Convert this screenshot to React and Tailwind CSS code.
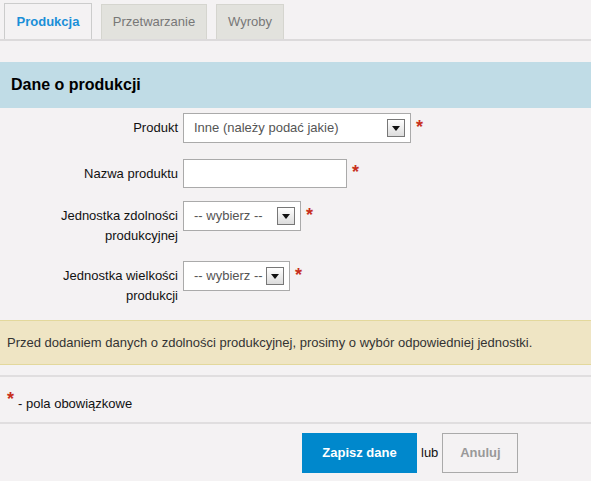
const font = { fontFamily: '"Liberation Sans", Arial, sans-serif' };

function Star({ className = "" }) {
  return (
    <span className={"text-[#c8301c] font-bold text-[18px] leading-none " + className}>*</span>
  );
}

function FakeSelect({ value, width }) {
  return (
    <div
      className={"h-[30px] bg-white border border-[#aaaaaa] flex items-center pl-[10px] pr-[5px] text-[13px] text-[#555555] " + width}
    >
      <span className="flex-1 whitespace-nowrap">{value}</span>
      <span className="w-[18px] h-[18px] border border-[#777777] bg-gradient-to-b from-white to-[#dcdcdc] flex items-center justify-center">
        <svg width="8" height="5" viewBox="0 0 8 5">
          <path d="M0 0h8L4 5z" fill="#111" />
        </svg>
      </span>
    </div>
  );
}

function Row({ label, children, className = "" }) {
  return (
    <div className={"flex items-start " + className}>
      <div className="w-[130px] ml-[48px] text-right text-[13px] leading-[20px] pt-[5px] text-[#111111]">
        {label}
      </div>
      <div className="ml-[5px] flex items-start">{children}</div>
    </div>
  );
}

export default function App() {
  return (
    <div className="w-[591px] h-[481px] bg-[#f4f2f3] overflow-hidden" style={font}>
      {/* tabs */}
      <div className="flex items-end pl-[4px] pt-[3px] border-b-2 border-[#dcdadb]">
        <div className="w-[88px] h-[36px] border border-b-0 border-[#cccccc] bg-[#f4f2f3] flex items-center justify-center text-[13px] font-bold text-[#1a8fd8]">
          Produkcja
        </div>
        <div className="ml-[9px] w-[106px] h-[35px] border border-b-0 border-[#d5d5cf] bg-[#e2e2dd] flex items-center justify-center text-[13px] text-[#777777]">
          Przetwarzanie
        </div>
        <div className="ml-[9px] w-[68px] h-[35px] border border-b-0 border-[#d5d5cf] bg-[#e2e2dd] flex items-center justify-center text-[13px] text-[#777777]">
          Wyroby
        </div>
      </div>

      <div className="mt-[21px] h-[46px] bg-[#c0dce6] flex items-center px-[11px] text-[16px] font-bold text-black">
        Dane o produkcji
      </div>

      <Row label="Produkt" className="mt-[5px]">
        <FakeSelect value="Inne (należy podać jakie)" width="w-[228px]" />
        <Star className="ml-[5px] mt-[5px]" />
      </Row>

      <Row label="Nazwa produktu" className="mt-[16px]">
        <div className="w-[164px] h-[29px] bg-white border border-[#aaaaaa]" />
        <Star className="ml-[5px] mt-[4px]" />
      </Row>

      <Row label="Jednostka zdolności produkcyjnej" className="mt-[13px]">
        <FakeSelect value="-- wybierz --" width="w-[118px]" />
        <Star className="ml-[5px] mt-[5px]" />
      </Row>

      <Row label="Jednostka wielkości produkcji" className="mt-[15px]">
        <FakeSelect value="-- wybierz --" width="w-[107px]" />
        <Star className="ml-[5px] mt-[5px]" />
      </Row>

      <div className="mt-[14px] h-[45px] bg-[#efe5c4] border-y border-[#e3d89c] flex items-center px-[7px] text-[13px] text-[#333333]">
        Przed dodaniem danych o zdolności produkcyjnej, prosimy o wybór odpowiedniej jednostki.
      </div>

      <div className="mt-[10px] border-t-2 border-[#e0dedf] h-[47px] flex items-start px-[7px] pt-[13px] text-[13px] text-[#111111]">
        <Star />
        <span className="ml-[4px] mt-[4px]">- pola obowiązkowe</span>
      </div>

      <div className="border-t-2 border-[#e0dedf] flex items-center pl-[302px] pt-[9px]">
        <button className="w-[115px] h-[40px] bg-[#0088cc] text-white text-[13px] font-bold">
          Zapisz dane
        </button>
        <span className="mx-[4px] text-[13px] text-[#111111]">lub</span>
        <button className="w-[76px] h-[40px] border border-[#aaaaaa] text-[#999999] text-[13px] font-bold">
          Anuluj
        </button>
      </div>
    </div>
  );
}
